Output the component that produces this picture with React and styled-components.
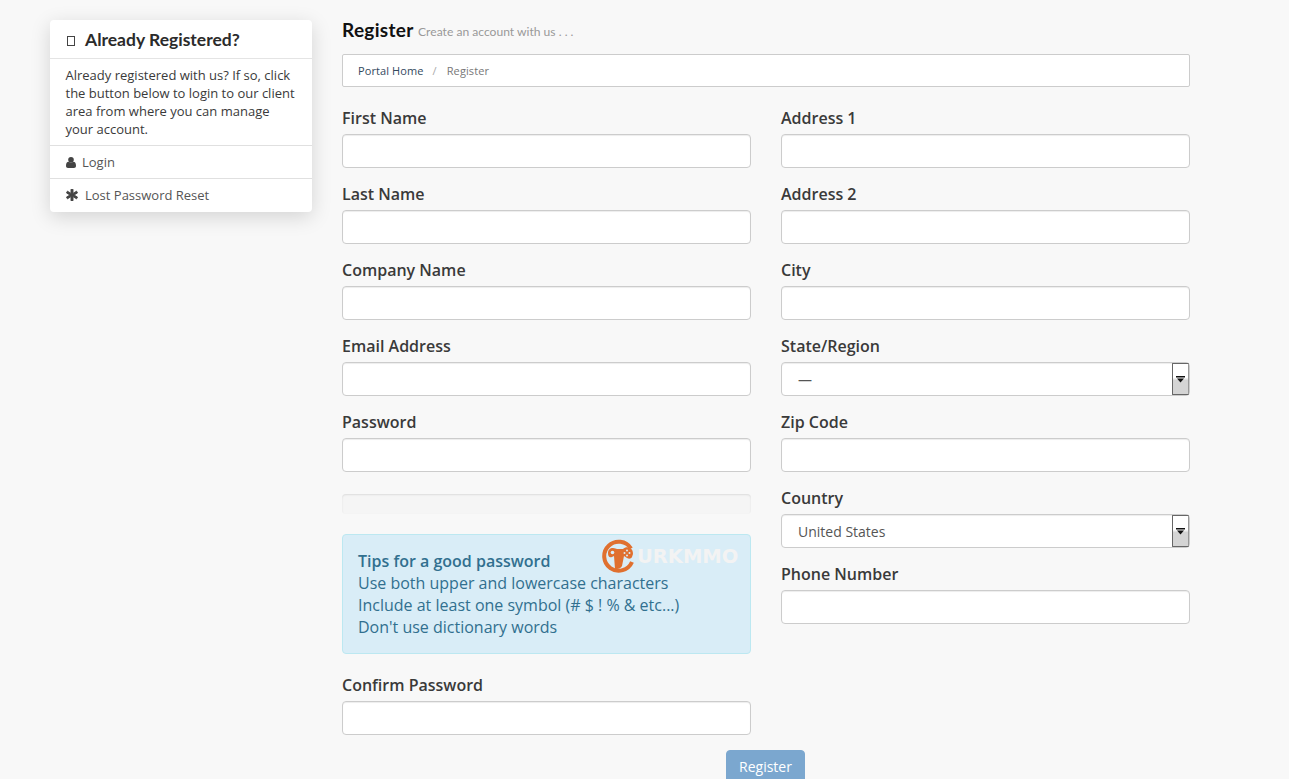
import React from 'react';
import styled, { createGlobalStyle } from 'styled-components';
import { FaAsterisk } from 'react-icons/fa';

const GlobalStyle = createGlobalStyle`
  * {
    box-sizing: border-box;
  }

  html,
  body {
    margin: 0;
    height: 100%;
    overflow: hidden;
    background: #f8f8f8;
    font-family: 'Open Sans', sans-serif;
    color: #333;
  }
`;

const leftFields = ['First Name', 'Last Name', 'Company Name', 'Email Address', 'Password'];

const UserIcon = () => (
  <svg width="10" height="11" viewBox="0 0 10 11">
    <circle cx="5" cy="2.800" r="2.800" fill="#444" />
    <path d="M0 9c0-3 1-4.200 2.500-4.200 1.500 1 3.500 1 5 0C9 4.800 10 6 10 9c0 1.300-.8 2-2 2H2c-1.200 0-2-.7-2-2z" fill="#444" />
  </svg>
);

const Logo = () => (
  <LogoWrap>
    <svg width="34" height="34" viewBox="0 0 34 34">
      <path d="M29 9.500A14.500 14.500 0 1 0 30 23" fill="none" stroke="#e0702f" strokeWidth="4" />
      <path
        d="M6 14c0-3 2-5 5-5 2 0 3 1 4 1h6c2-2 5-2 7-1 2 1 3 3 3 6l-1 3c-1 2-3 2-5 1l-3-2-2 10c-1 2-3 3-5 3h-2l-1-13-2 1c-3 1-4-1-4-4z"
        fill="#e0702f"
      />
      <circle cx="10.500" cy="13.500" r="1.800" fill="#d9edf7" />
      <circle cx="25" cy="11.500" r="1" fill="#d9edf7" />
      <circle cx="27.500" cy="14" r="1" fill="#d9edf7" />
      <circle cx="25" cy="16.500" r="1" fill="#d9edf7" />
      <circle cx="22.500" cy="14" r="1" fill="#d9edf7" />
    </svg>
    <LogoText>URKMMO</LogoText>
  </LogoWrap>
);

const SelectField = ({ label, value }) => (
  <Field>
    <Label>{label}</Label>
    <SelectBox>
      <Select defaultValue={value}>
        <option>{value}</option>
      </Select>
      <SelectArrow>
        <svg width="9" height="7" viewBox="0 0 9 7">
          <path d="M0 0h9v1.500H0zM1 2.500h7L4.500 6.500z" fill="#111" />
        </svg>
      </SelectArrow>
    </SelectBox>
  </Field>
);

const TextField = ({ label }) => (
  <Field>
    <Label>{label}</Label>
    <Input type="text" />
  </Field>
);

const App = () => {
  return (
    <Page>
      <GlobalStyle />

      <Sidebar>
        <SidebarTitle>
          <TitleIcon />
          Already Registered?
        </SidebarTitle>
        <SidebarBody>
          Already registered with us? If so, click the button below to login to our client area
          from where you can manage your account.
        </SidebarBody>
        <SidebarLink $gap={6}>
          <UserIcon />
          Login
        </SidebarLink>
        <SidebarLink $gap={7}>
          <FaAsterisk size={12} stroke="currentColor" strokeWidth={40} />
          Lost Password Reset
        </SidebarLink>
      </Sidebar>

      <Main>
        <Heading>
          Register <small>Create an account with us . . .</small>
        </Heading>

        <Breadcrumb>
          <span>Portal Home</span>
          <Slash>/</Slash>
          <Current>Register</Current>
        </Breadcrumb>

        <Columns>
          <div>
            {leftFields.map((label) => (
              <TextField key={label} label={label} />
            ))}

            <Progress />

            <Tips>
              <strong>Tips for a good password</strong>
              <br />
              Use both upper and lowercase characters
              <br />
              Include at least one symbol (# $ ! % &amp; etc...)
              <br />
              Don't use dictionary words
              <Logo />
            </Tips>

            <TextField label="Confirm Password" />
          </div>

          <div>
            <TextField label="Address 1" />
            <TextField label="Address 2" />
            <TextField label="City" />
            <SelectField label="State/Region" value="—" />
            <TextField label="Zip Code" />
            <SelectField label="Country" value="United States" />
            <TextField label="Phone Number" />
          </div>
        </Columns>

        <Actions>
          <SubmitButton type="button">Register</SubmitButton>
        </Actions>
      </Main>
    </Page>
  );
};

const Page = styled.div`
  display: flex;
  align-items: flex-start;
  gap: 30px;
  height: 779px;
  overflow: hidden;
  padding: 20px 0 0 50px;
`;

const Sidebar = styled.aside`
  flex: 0 0 262px;
  background: #fff;
  border-radius: 4px;
  box-shadow: 0 5px 20px rgba(0, 0, 0, 0.15);
  font-size: 13px;
  line-height: 18px;
  color: #333;
`;

const SidebarTitle = styled.h3`
  display: flex;
  align-items: center;
  gap: 10px;
  height: 39px;
  margin: 0;
  padding: 1px 17px 0;
  border-bottom: 1px solid #e4e4e4;
  font-family: 'Lato', sans-serif;
  font-size: 17.500px;
  font-weight: 700;
  color: #2b2b2b;
`;

const TitleIcon = styled.span`
  width: 8px;
  height: 10px;
  margin-top: 2px;
  border: 1px solid #444;
`;

const SidebarBody = styled.p`
  margin: 0;
  padding: 7px 16px 7px 15.500px;
  color: #3a3a3a;
`;

const SidebarLink = styled.div`
  display: flex;
  align-items: center;
  gap: ${(props) => props.$gap}px;
  height: 33px;
  padding: 0 16px;
  border-top: 1px solid #e0e0e0;
  color: #555;

  svg {
    color: #444;
  }

  &:last-child {
    height: 34px;
    padding-bottom: 2px;
  }
`;

const Main = styled.main`
  flex: 0 0 848px;
`;

const Heading = styled.h1`
  height: 34px;
  margin: -9px 0 9px;
  padding-top: 4px;
  font-family: 'Lato', sans-serif;
  font-size: 19px;
  line-height: 30px;
  font-weight: 700;
  letter-spacing: 0.3px;
  color: #111;

  small {
    position: relative;
    top: -1px;
    font-size: 12.100px;
    font-weight: 400;
    letter-spacing: 0;
    color: #999;
  }
`;

const Breadcrumb = styled.div`
  display: flex;
  align-items: center;
  height: 33px;
  margin-bottom: 20px;
  padding: 0 15px;
  background: #fff;
  border: 1px solid #ccc;
  border-radius: 2px;
  font-size: 11px;
  letter-spacing: 0.1px;
  color: #34495e;
`;

const Slash = styled.span`
  margin: 0 10px 0 9px;
  color: #aaa;
`;

const Current = styled.span`
  color: #777;
`;

const Columns = styled.div`
  display: grid;
  grid-template-columns: 409px 409px;
  gap: 30px;
`;

const Field = styled.div`
  margin-bottom: 15px;
`;

const Label = styled.label`
  display: block;
  margin-bottom: 5px;
  font-size: 16px;
  line-height: 22px;
  font-weight: 600;
  color: #3a3a3a;
`;

const Input = styled.input`
  display: block;
  width: 100%;
  height: 34px;
  padding: 6px 12px;
  background: #fff;
  border: 1px solid #ccc;
  border-radius: 4px;
  box-shadow: inset 0 1px 1px rgba(0, 0, 0, 0.075);
  font-family: inherit;
  font-size: 14px;
`;

const SelectBox = styled.div`
  position: relative;
  height: 34px;
`;

const Select = styled.select`
  display: block;
  width: 100%;
  height: 34px;
  padding: 0 16px;
  appearance: none;
  background: #fff;
  border: 1px solid #ccc;
  border-radius: 4px;
  box-shadow: inset 0 1px 1px rgba(0, 0, 0, 0.075);
  font-family: inherit;
  font-size: 14px;
  color: #555;
`;

const SelectArrow = styled.span`
  position: absolute;
  top: 1px;
  right: 1px;
  display: flex;
  justify-content: center;
  align-items: center;
  width: 17px;
  height: 32px;
  background: linear-gradient(#fff 45%, #d4d4d4 55%);
  border: 1px solid #666;
  border-right-color: #999;
  border-radius: 1px;
`;

const Progress = styled.div`
  height: 20px;
  margin: 22px 0 20px;
  background: #f5f5f5;
  border-radius: 4px;
  box-shadow: inset 0 1px 2px rgba(0, 0, 0, 0.1);
`;

const Tips = styled.div`
  position: relative;
  margin-bottom: 20px;
  padding: 15px;
  background: #d9edf7;
  border: 1px solid #bce8f1;
  border-radius: 4px;
  font-size: 16px;
  line-height: 22px;
  color: #31708f;

  strong {
    font-weight: 600;
  }
`;

const LogoWrap = styled.div`
  position: absolute;
  top: 4px;
  left: 259px;
  display: flex;
  align-items: center;
`;

const LogoText = styled.span`
  margin: 1px 0 0 1px;
  font-family: 'DejaVu Sans', sans-serif;
  font-size: 19.500px;
  line-height: 22px;
  font-weight: 700;
  color: #f3f3f3;
`;

const Actions = styled.div`
  display: flex;
  justify-content: center;
`;

const SubmitButton = styled.button`
  width: 79px;
  height: 34px;
  margin-right: 1px;
  padding: 0 0 2px;
  background: #7ba7cf;
  border: 1px solid #7ba7cf;
  border-radius: 4px;
  font-family: inherit;
  font-size: 14px;
  color: #fff;
`;

export default App;
